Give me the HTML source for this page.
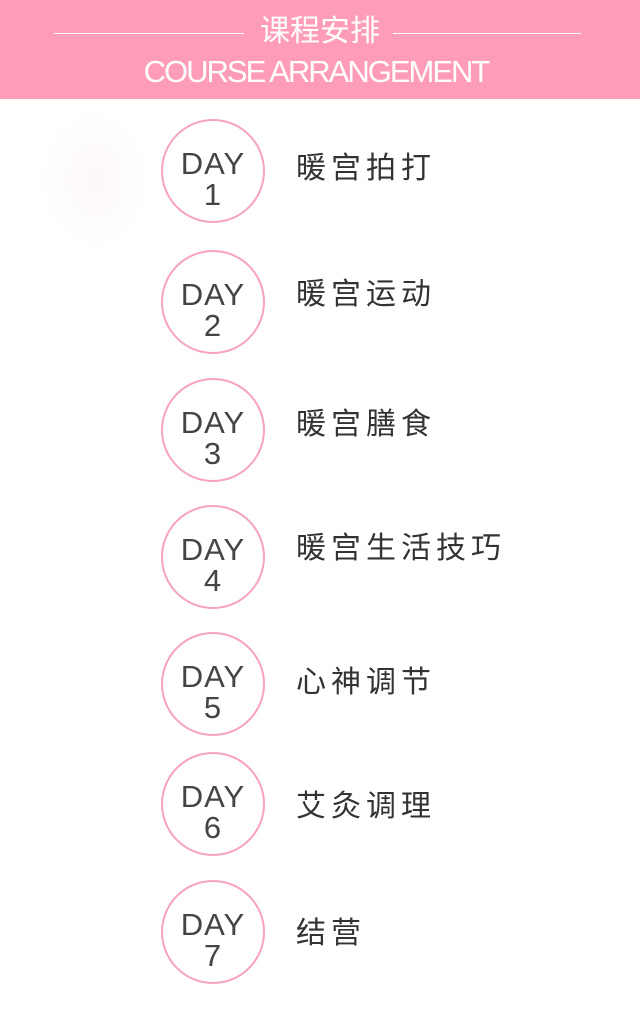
<!DOCTYPE html>
<html><head><meta charset="utf-8"><style>
body{margin:0;width:640px;height:1012px;background:#fff;position:relative;overflow:hidden;font-family:"Liberation Sans","Noto Sans CJK SC",sans-serif}
.hd{position:absolute;left:0;top:0;width:640px;height:99px;background:#ff9db9}
.line{position:absolute;top:33px;height:1px;background:#fff}
.t1{position:absolute;top:14px;left:0;width:640px;text-align:center;color:#fff;font-size:30px;line-height:36px}
.t2{position:absolute;top:54px;left:-4px;width:640px;text-align:center;color:#fff;font-size:31px;line-height:36px;letter-spacing:-2px}
.c{position:absolute;left:161px;width:100px;height:100px;border:2px solid #f6a3bb;border-radius:50%;color:#444;text-align:center;font-size:31px;line-height:31px;letter-spacing:1px}
.c div:first-child{margin-top:27px}
.l{position:absolute;left:296px;font-size:30px;color:#333;letter-spacing:5px;line-height:36px}
</style></head><body>
<div class="hd">
<div class="line" style="left:54px;width:190px"></div>
<div class="line" style="left:393px;width:188px"></div>
<div class="t1">课程安排</div>
<div class="t2">COURSE ARRANGEMENT</div>
</div>
<div style="position:absolute;left:40px;top:110px;width:110px;height:140px;border-radius:50%;background:radial-gradient(#fef7f9,#fff 70%)"></div>
<div class="c" style="top:119px"><div>DAY</div><div>1</div></div><div class="l" style="top:151px">暖宫拍打</div>
<div class="c" style="top:250px"><div>DAY</div><div>2</div></div><div class="l" style="top:277px">暖宫运动</div>
<div class="c" style="top:378px"><div>DAY</div><div>3</div></div><div class="l" style="top:407px">暖宫膳食</div>
<div class="c" style="top:505px"><div>DAY</div><div>4</div></div><div class="l" style="top:531px">暖宫生活技巧</div>
<div class="c" style="top:632px"><div>DAY</div><div>5</div></div><div class="l" style="top:665px">心神调节</div>
<div class="c" style="top:752px"><div>DAY</div><div>6</div></div><div class="l" style="top:789px">艾灸调理</div>
<div class="c" style="top:880px"><div>DAY</div><div>7</div></div><div class="l" style="top:916px">结营</div>
</body></html>
